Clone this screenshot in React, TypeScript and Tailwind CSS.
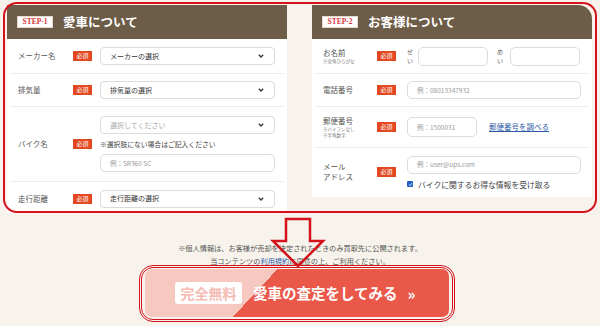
import React from "react";

const Badge = () => (
  <span className="flex h-[10px] w-[19px] shrink-0 items-center justify-center bg-[#e2471f] text-[6px] leading-none text-white">
    必須
  </span>
);

const Chevron = () => (
  <svg width="6" height="4" viewBox="0 0 6 4" className="shrink-0">
    <path d="M0.8 0.8 L3 3 L5.2 0.8" fill="none" stroke="#333" strokeWidth="1.3" />
  </svg>
);

const Select = ({ text, placeholder }: { text: string; placeholder?: boolean }) => (
  <div className="flex h-[18px] w-[175px] items-center justify-between rounded-[4px] border border-[#dcdcdc] bg-white pl-[9px] pr-[10px]">
    <span className={`text-[7px] leading-none ${placeholder ? "text-[#aaa]" : "text-[#333]"}`}>{text}</span>
    <Chevron />
  </div>
);

const Input = ({ ph, w, h = 18 }: { ph?: string; w: number; h?: number }) => (
  <div
    className="flex items-center rounded-[5px] border border-[#dcdcdc] bg-white pl-[9px] text-[6.5px] leading-none text-[#999]"
    style={{ width: w, height: h }}
  >
    {ph}
  </div>
);

const Header = ({ step, title, rounded }: { step: string; title: string; rounded?: boolean }) => (
  <div className={`flex h-[34px] shrink-0 items-center gap-[10px] bg-[#6d5c47] pl-[10px] ${rounded ? "rounded-tr-[14px]" : ""}`}>
    <span className="flex h-[12px] w-[36px] items-center justify-center border border-[#e8d8cc] bg-white font-['Liberation_Serif',serif] text-[7.5px] font-bold leading-none text-[#d8343a]">
      {step}
    </span>
    <span className="text-[12.5px] font-bold leading-none text-white">{title}</span>
  </div>
);

export default function App() {
  return (
    <div className="relative h-[326px] w-[600px] overflow-hidden bg-[#f7f3ec] font-['Noto_Sans_CJK_JP',sans-serif]">
      <div className="flex h-[213px] gap-[25px] pl-[7px] pt-[5px]">
        {/* STEP-1 */}
        <div className="flex w-[280px] flex-col overflow-hidden">
          <Header step="STEP-1" title="愛車について" />
          <div className="flex-1 bg-white px-[3px]">
            <div className="flex h-[35px] items-center border-b border-[#ececec] pl-[8px]">
              <span className="w-[55px] text-[7.5px] text-[#555]">メーカー名</span>
              <Badge />
              <div className="ml-[8px]">
                <Select text="メーカーの選択" />
              </div>
            </div>
            <div className="flex h-[33px] items-center border-b border-[#ececec] pl-[8px]">
              <span className="w-[55px] text-[7.5px] text-[#555]">排気量</span>
              <Badge />
              <div className="ml-[8px]">
                <Select text="排気量の選択" />
              </div>
            </div>
            <div className="flex h-[75px] items-center border-b border-[#ececec] pl-[8px]">
              <span className="w-[55px] text-[7.5px] text-[#555]">バイク名</span>
              <Badge />
              <div className="ml-[8px] flex flex-col">
                <Select text="選択してください" placeholder />
                <span className="mt-[7px] text-[6.8px] leading-none text-[#444]">※選択肢にない場合はご記入ください</span>
                <div className="mt-[6px]">
                  <Input ph="例：SR360 SC" w={175} />
                </div>
              </div>
            </div>
            <div className="flex h-[33px] items-center pl-[8px]">
              <span className="w-[55px] text-[7.5px] text-[#555]">走行距離</span>
              <Badge />
              <div className="ml-[8px]">
                <Select text="走行距離の選択" />
              </div>
            </div>
          </div>
        </div>

        {/* STEP-2 */}
        <div className="flex h-[192px] w-[280px] flex-col">
          <Header step="STEP-2" title="お客様について" rounded />
          <div className="flex-1 bg-white px-[3px]">
            <div className="flex h-[35px] items-center border-b border-[#ececec] pl-[8px]">
              <div className="flex w-[54px] flex-col">
                <span className="text-[7.5px] leading-[10px] text-[#555]">お名前</span>
                <span className="text-[4.5px] leading-[6px] text-[#777]">※全角ひらがな</span>
              </div>
              <Badge />
              <div className="ml-[11px] flex w-[11px] flex-col text-[6px] leading-[9px] text-[#666]">
                <span>せ</span>
                <span>い</span>
              </div>
              <Input w={70} h={19} />
              <div className="ml-[9px] flex w-[13px] flex-col text-[6px] leading-[9px] text-[#666]">
                <span>め</span>
                <span>い</span>
              </div>
              <Input w={70} h={19} />
            </div>
            <div className="flex h-[33px] items-center border-b border-[#ececec] pl-[8px]">
              <span className="w-[54px] text-[7.5px] text-[#555]">電話番号</span>
              <Badge />
              <div className="ml-[11px]">
                <Input ph="例：08013347932" w={174} />
              </div>
            </div>
            <div className="flex h-[41px] items-center border-b border-[#ececec] pl-[8px]">
              <div className="flex w-[54px] flex-col">
                <span className="text-[7.5px] leading-[10px] text-[#555]">郵便番号</span>
                <span className="text-[4.5px] leading-[6px] text-[#777]">※ハイフンなし</span>
                <span className="text-[4.5px] leading-[6px] text-[#777]">※半角数字</span>
              </div>
              <Badge />
              <div className="ml-[11px]">
                <Input ph="例：1500031" w={70} h={20} />
              </div>
              <span className="ml-[12px] text-[7.5px] leading-none text-[#2d5aa6] underline">郵便番号を調べる</span>
            </div>
            <div className="flex h-[48px] items-center pl-[8px]">
              <div className="flex w-[54px] flex-col text-[7.5px] leading-[10px] text-[#555]">
                <span>メール</span>
                <span>アドレス</span>
              </div>
              <Badge />
              <div className="ml-[11px] flex flex-col">
                <Input ph="例：user@ups.com" w={174} />
                <div className="mt-[7px] flex items-center gap-[5px]">
                  <span className="flex h-[6px] w-[6px] items-center justify-center rounded-[1px] bg-[#1f5fc0]">
                    <svg width="5" height="5" viewBox="0 0 5 5">
                      <path d="M1 2.6 L2 3.6 L4 1.2" fill="none" stroke="#fff" strokeWidth="0.9" />
                    </svg>
                  </span>
                  <span className="text-[7.8px] leading-none text-[#444]">バイクに関するお得な情報を受け取る</span>
                </div>
              </div>
            </div>
          </div>
        </div>
      </div>

      <div className="mt-[29px] flex flex-col items-center text-[7.2px] leading-[13px] text-[#555]">
        <span>※個人情報は、お客様が売却を決定されたときのみ買取先に公開されます。</span>
        <span>
          当コンテンツの<span className="text-[#2d5aa6]">利用規約</span>に同意の上、ご利用ください。
        </span>
      </div>

      <div className="ml-[145px] mt-px flex h-[48px] w-[304px] items-center rounded-[7px] bg-[linear-gradient(133deg,#f7c8c0_38%,#ea5849_38%)] pl-[30px]">
        <span className="flex h-[22px] w-[67px] items-center justify-center rounded-[3px] bg-white text-[14px] font-bold leading-none text-[#f4bbb2]">
          完全無料
        </span>
        <span className="ml-[11px] text-[14.5px] font-bold leading-none text-white">愛車の査定をしてみる</span>
        <span className="ml-[10px] text-[15px] font-bold leading-none text-white">»</span>
      </div>

      {/* annotations */}
      <div className="pointer-events-none absolute left-[3px] top-[2px] h-[211px] w-[594px] rounded-[14px] border-2 border-[#d5121b]" />
      <svg className="pointer-events-none absolute left-0 top-0" width="600" height="326">
        <path
          d="M286 219 L310 219 L310 241 L323 241 L298 266 L273 241 L286 241 Z"
          fill="none"
          stroke="#d5121b"
          strokeWidth="2.5"
          strokeLinejoin="miter"
        />
      </svg>
      <div className="pointer-events-none absolute left-[139px] top-[265px] h-[57px] w-[316px] rounded-[14px] border-[3px] border-double border-[#d5121b]" />
    </div>
  );
}
